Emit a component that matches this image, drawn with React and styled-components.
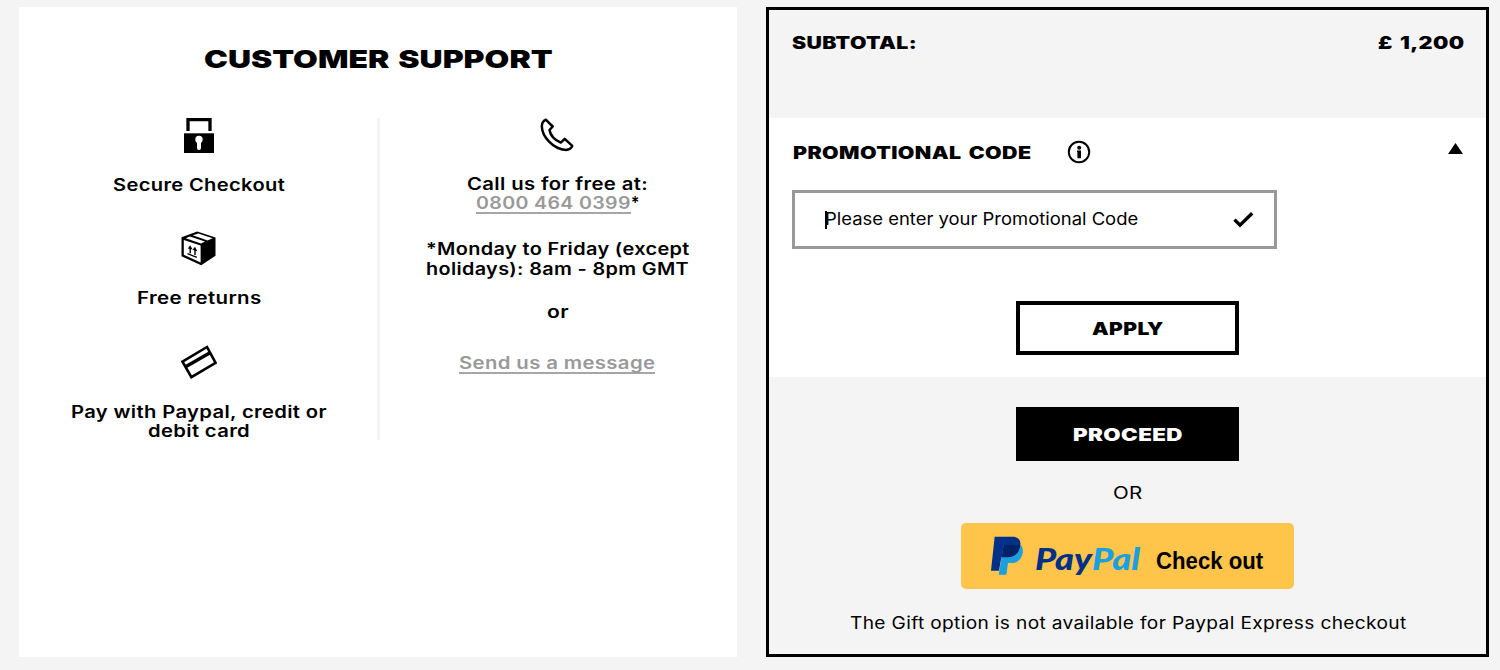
import styled, { createGlobalStyle } from "styled-components";
import { useLayoutEffect, useRef, useState } from "react";

const GlobalStyle = createGlobalStyle`
  * {
    box-sizing: border-box;
  }

  body {
    margin: 0;
    background-color: #f4f4f4;
    color: #000;
    font-family: "Inter", "Liberation Sans", sans-serif;
  }
`;

const Page = styled.main`
  width: 1500px;
  height: 670px;
  padding: 7px 10px 13px 19px;
  display: flex;
  gap: 29px;
  overflow: hidden;
`;

/* extended lettering, the inner span is stretched to the given width */
const TextSlot = styled.span`
  display: inline-block;
  vertical-align: top;
  width: ${(props) => props.$width}px;
  height: ${(props) => props.$line}px;
  line-height: ${(props) => props.$line}px;
  font-size: ${(props) => props.$size}px;
  font-weight: ${(props) => props.$weight};
  letter-spacing: ${(props) => props.$spacing}px;
  word-spacing: ${(props) => (props.$weight === 900 ? 2 : 0)}px;
  font-family: ${(props) => props.$family || "inherit"};
  font-style: ${(props) => (props.$italic ? "italic" : "normal")};
  color: ${(props) => props.$color || "inherit"};
  text-align: left;
`;

const Stretched = styled.span`
  display: inline-block;
  vertical-align: top;
  margin-top: 0.6px;
  white-space: nowrap;
  transform-origin: left center;
`;

const WideText = ({
  children,
  width,
  size = 16.8,
  line = 19.5,
  weight = 600,
  spacing = 0.3,
  family,
  italic,
  color,
}) => {
  const textRef = useRef(null);
  const [scale, setScale] = useState(1);

  useLayoutEffect(() => {
    setScale(width / (textRef.current.offsetWidth - spacing));
  }, [width, spacing]);

  return (
    <TextSlot
      $width={width}
      $size={size}
      $line={line}
      $weight={weight}
      $spacing={spacing}
      $family={family}
      $italic={italic}
      $color={color}
    >
      <Stretched ref={textRef} style={{ transform: `scaleX(${scale})` }}>
        {children}
      </Stretched>
    </TextSlot>
  );
};

const SupportPanel = styled.section`
  width: 718px;
  height: 650px;
  background-color: #fff;
`;

const SupportTitle = styled.h1`
  margin: 0;
  padding-top: 36.4px;
  height: 111px;
  text-align: center;
  font-size: 0;
`;

const SupportColumns = styled.div`
  display: flex;
  height: 322px;
`;

const SupportColumn = styled.div`
  width: ${(props) => props.$width}px;
  display: flex;
  flex-direction: column;
  align-items: center;
`;

const ServiceColumn = styled(SupportColumn)`
  gap: 36.3px;
  padding-left: 1px;
  border-right: 3px solid #f4f4f4;
`;

const Service = styled.div`
  display: flex;
  flex-direction: column;
  align-items: center;

  svg {
    margin-bottom: 22.5px;
  }
`;

const Paragraph = styled.div`
  display: flex;
  flex-direction: column;
  align-items: center;
  margin-top: ${(props) => props.$top}px;
`;

const PhoneRow = styled.div`
  display: flex;
`;

const GreyLink = styled.a`
  display: block;
  height: ${(props) => props.$height}px;
  color: #999;
  border-bottom: 2px solid #a6a6a6;
  text-decoration: none;
`;

const SummaryPanel = styled.section`
  width: 723px;
  height: 650px;
  border: 3px solid #000;
  display: flex;
  flex-direction: column;
`;

const Subtotal = styled.div`
  height: 108px;
  padding: 22px 22px 0 23px;
  display: flex;
  justify-content: space-between;
`;

const Promo = styled.div`
  height: 259px;
  padding: 22px 23px 0;
  background-color: #fff;
`;

const PromoHeader = styled.div`
  display: flex;
  align-items: center;
  height: 24px;
  padding-left: 1px;
`;

const InfoIcon = styled.svg`
  margin-left: 36px;
`;

const ArrowUp = styled.svg`
  margin: -8px 0 0 auto;
`;

const PromoField = styled.div`
  width: 485px;
  height: 59px;
  margin-top: 26px;
  padding: 0 20px 0 30px;
  border: 3px solid #999;
  display: flex;
  align-items: center;
  justify-content: space-between;
`;

const Placeholder = styled.div`
  display: flex;
  align-items: center;
`;

const Caret = styled.span`
  width: 1.5px;
  height: 18px;
  margin-right: -2px;
  background-color: #000;
`;

const Button = styled.button`
  display: flex;
  align-items: center;
  justify-content: center;
  width: 223px;
  height: 54px;
  margin: ${(props) => props.$top}px auto 0;
  padding: 2px 0 0;
  border: 4px solid #000;
  background-color: ${(props) => (props.$filled ? "#000" : "#fff")};
  color: ${(props) => (props.$filled ? "#fff" : "#000")};
  font-family: inherit;
`;

const Actions = styled.div`
  display: flex;
  flex-direction: column;
  align-items: center;
`;

const OrText = styled.div`
  height: 20px;
  margin-top: 21px;
`;

const PaypalButton = styled.button`
  display: flex;
  width: 333px;
  height: 66px;
  margin-top: 21px;
  padding: 12px 0 0 29px;
  border: none;
  border-radius: 5px;
  background-color: #ffc44a;
  font-family: inherit;
`;

const Wordmark = styled.span`
  display: flex;
  margin: 3.4px 0 0 11px;
`;

const CheckoutLabel = styled.span`
  margin: 9.4px 0 0 16px;
`;

const GiftNote = styled.div`
  margin-top: 24px;
`;

const LockIcon = () => (
  <svg width="30" height="35" viewBox="0 0 30 35">
    <path d="M4 13V1.7H26V13" fill="none" stroke="#000" strokeWidth="3.3" />
    <path d="M0 15.3H30V35H0Z" />
    <circle cx="15" cy="21.4" r="3.7" fill="#fff" />
    <path d="M15 22V30" stroke="#fff" strokeWidth="4" strokeLinecap="round" />
  </svg>
);

const BoxIcon = () => (
  <svg width="35" height="35" viewBox="0 0 35 35">
    <path d="M.5 6.2 16.2.5 34.5 6.4V24.7L20.2 34.2.5 25.2Z" />
    <g fill="#fff">
      <path d="M2.8 9.1 19.6 14.6V31.4L2.8 23.8Z" />
      <path d="M11.8 4.3 17.4 2.5 31.6 7.2 26.5 9.5Z" />
      <path d="M4.8 7.2 8.8 5.6 24 10.6 20 12.4Z" />
    </g>
    <path
      d="M9.2 22.2V16M14 24V17.7M6.5 22.7 15.8 26.4"
      fill="none"
      stroke="#000"
      strokeWidth="1.4"
    />
    <path d="M6.8 17.4 9.2 14.2 11.6 18.6ZM11.6 18.8 14 15.8 16.4 20.4Z" />
  </svg>
);

const CardIcon = () => (
  <svg width="36" height="35" viewBox="0 0 36 35">
    <path
      d="M1.5 16.7 26 2 34.6 17.9 10.4 32.2Z"
      fill="none"
      stroke="#000"
      strokeWidth="2.6"
    />
    <path d="M4.2 22 29 7.8" stroke="#000" strokeWidth="3.4" />
  </svg>
);

const PhoneIcon = () => (
  <svg width="34" height="34" viewBox="0 0 34 34">
    <path
      d="M5.8 1.7 12.7 8.5 9.5 12Q11 20.5 20.8 24.6L24.7 20.8 32.3 27.8Q30.8 31.8 26 31.9C13 31.5 2 18.5 1.8 8Q2 3.5 5.8 1.7Z"
      fill="none"
      stroke="#000"
      strokeWidth="2.5"
      strokeLinejoin="round"
    />
  </svg>
);

const PaypalMark = () => (
  <svg width="34" height="41" viewBox="122 76 102 123">
    <path
      fill="#003087"
      d="M136 81H190C207 81 215 92 213 106C210 130 196 143 175 143H156L149 183H125Z"
    />
    <path
      fill="#1a9fe0"
      d="M163 106 213 106C222 112 221 126 219 134C214 152 203 159 189 160H176L171 195H148Z"
    />
    <path fill="#012169" d="M163 106H213C210 130 196 143 175 143H157Z" />
  </svg>
);

const services = [
  { Icon: LockIcon, lines: [["Secure Checkout", 172]] },
  { Icon: BoxIcon, lines: [["Free returns", 124]] },
  {
    Icon: CardIcon,
    lines: [
      ["Pay with Paypal, credit or", 256],
      ["debit card", 102],
    ],
  },
];

const CustomerSupport = () => (
  <SupportPanel>
    <SupportTitle>
      <WideText width={349} size={25} line={31} weight={900} spacing={0}>
        CUSTOMER SUPPORT
      </WideText>
    </SupportTitle>
    <SupportColumns>
      <ServiceColumn $width={361}>
        {services.map(({ Icon, lines }) => (
          <Service key={lines[0][0]}>
            <Icon />
            {lines.map(([text, width]) => (
              <WideText key={text} width={width}>
                {text}
              </WideText>
            ))}
          </Service>
        ))}
      </ServiceColumn>
      <SupportColumn $width={354}>
        <PhoneIcon />
        <Paragraph $top={22}>
          <WideText width={181}>Call us for free at:</WideText>
          <PhoneRow>
            <GreyLink $height={20.5}>
              <WideText width={155}>0800 464 0399</WideText>
            </GreyLink>
            <WideText width={8}>*</WideText>
          </PhoneRow>
        </Paragraph>
        <Paragraph $top={25.8}>
          <WideText width={263}>*Monday to Friday (except</WideText>
          <WideText width={263}>holidays): 8am - 8pm GMT</WideText>
        </Paragraph>
        <Paragraph $top={23.6}>
          <WideText width={21}>or</WideText>
        </Paragraph>
        <Paragraph $top={31.1}>
          <GreyLink $height={21.5}>
            <WideText width={196}>Send us a message</WideText>
          </GreyLink>
        </Paragraph>
      </SupportColumn>
    </SupportColumns>
  </SupportPanel>
);

const OrderSummary = () => (
  <SummaryPanel>
    <Subtotal>
      <WideText width={125} weight={900} line={21}>
        SUBTOTAL:
      </WideText>
      <WideText width={86} weight={900} line={21}>
        £ 1,200
      </WideText>
    </Subtotal>
    <Promo>
      <PromoHeader>
        <WideText width={238} weight={900} line={24}>
          PROMOTIONAL CODE
        </WideText>
        <InfoIcon width="24" height="24" viewBox="0 0 24 24">
          <circle
            cx="12"
            cy="12"
            r="10.2"
            fill="none"
            stroke="#000"
            strokeWidth="2"
          />
          <circle cx="12.2" cy="7.7" r="2" />
          <path d="M10 10.6H14V18.3H10.4V12H10Z" />
        </InfoIcon>
        <ArrowUp width="15" height="11" viewBox="0 0 15 11">
          <path d="M7.5 0 15 11H0Z" />
        </ArrowUp>
      </PromoHeader>
      <PromoField>
        <Placeholder>
          <Caret />
          <WideText width={313} weight={400} spacing={0}>
            Please enter your Promotional Code
          </WideText>
        </Placeholder>
        <svg width="21" height="17" viewBox="0 0 21 17">
          <path
            d="M1.5 8.6 7 14.2 19.2 2.2"
            fill="none"
            stroke="#000"
            strokeWidth="3.4"
          />
        </svg>
      </PromoField>
      <Button $top={52}>
        <WideText width={71} weight={900} line={21}>
          APPLY
        </WideText>
      </Button>
    </Promo>
    <Actions>
      <Button $top={30} $filled>
        <WideText width={110} weight={900} line={21}>
          PROCEED
        </WideText>
      </Button>
      <OrText>
        <WideText width={29} weight={400} line={20}>
          OR
        </WideText>
      </OrText>
      <PaypalButton>
        <PaypalMark />
        <Wordmark>
          <WideText
            width={57}
            size={31}
            line={38}
            weight={900}
            spacing={0}
            family="Lato"
            italic
            color="#003087"
          >
            Pay
          </WideText>
          <WideText
            width={48}
            size={31}
            line={38}
            weight={900}
            spacing={0}
            family="Lato"
            italic
            color="#1a9fe0"
          >
            Pal
          </WideText>
        </Wordmark>
        <CheckoutLabel>
          <WideText
            width={107}
            size={23}
            line={32}
            weight={700}
            spacing={0}
            family="'Liberation Sans'"
          >
            Check out
          </WideText>
        </CheckoutLabel>
      </PaypalButton>
      <GiftNote>
        <WideText width={556} weight={400}>
          The Gift option is not available for Paypal Express checkout
        </WideText>
      </GiftNote>
    </Actions>
  </SummaryPanel>
);

const App = () => {
  return (
    <>
      <GlobalStyle />
      <Page>
        <CustomerSupport />
        <OrderSummary />
      </Page>
    </>
  );
};

export default App;
